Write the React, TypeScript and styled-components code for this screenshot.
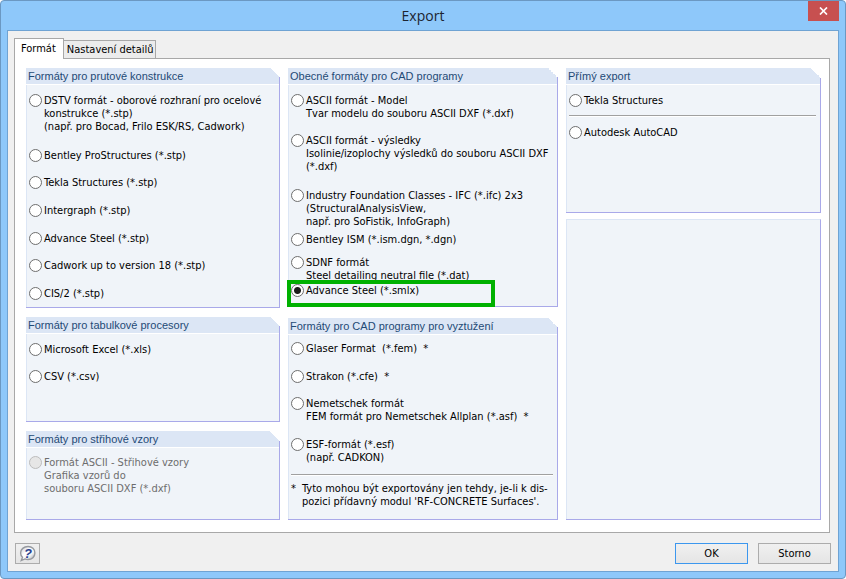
import React, { useId, type ReactNode } from 'react';
import styled, { createGlobalStyle, css } from 'styled-components';

const GlobalStyle = createGlobalStyle`
  * { box-sizing: border-box; }
  body {
    margin: 0;
    background: #fff;
    color: #000;
    font: 11px/13px "DejaVu Sans Condensed", "DejaVu Sans", sans-serif;
  }
  button, input { font: inherit; color: inherit; margin: 0; }
`;

const Window = styled.div`
  display: flex;
  flex-direction: column;
  min-height: 100vh;
  padding: 0 6px 6px;
  background: #8ec8fa;
  border: 1px solid #6b98c2;
  border-radius: 4px;
`;

const TitleBar = styled.header`
  display: grid;
  grid-template-columns: 31px 1fr 31px;
  height: 29px;
`;

const Title = styled.h1`
  grid-column: 2;
  margin: 0;
  font: 14px/30px "Open Sans", "Noto Sans", sans-serif;
  color: #1c2430;
  text-align: center;
`;

const CloseButton = styled.button`
  display: flex;
  align-items: center;
  justify-content: center;
  height: 20px;
  padding: 0;
  border: 0;
  background: #c75050;
`;

const Content = styled.main`
  flex: 1;
  display: flex;
  flex-direction: column;
  padding: 7px 7px 7px 6px;
  background: #f0f0f0;
  border: 1px solid #6fa3d3;
`;

const TabList = styled.div`
  display: flex;
  align-items: flex-end;
`;

const Tab = styled.button<{ $active?: boolean }>`
  position: relative;
  height: 18px;
  padding: 0 1px 0 3px;
  border: 1px solid #a8a8a8;
  border-width: 1px 1px 0 0;
  background: #ececec;
  white-space: nowrap;
  ${(p) =>
    p.$active &&
    css`
      height: 21px;
      margin-bottom: -1px;
      padding: 0 7px 1px 6px;
      border-left-width: 1px;
      background: #fff;
    `}
`;

const TabPanel = styled.section`
  flex: 1;
  display: grid;
  grid-template-columns: minmax(0, 254fr) minmax(0, 270fr) minmax(0, 255fr);
  column-gap: 8px;
  margin-right: 1px;
  padding: 9px 8px 12px 11px;
  background: #fff;
  border: 1px solid #a8a8a8;
`;

const Column = styled.div<{ $gap: number }>`
  display: flex;
  flex-direction: column;
  gap: ${(p) => p.$gap}px;
`;

const GroupBox = styled.section<{ $grow: number }>`
  position: relative;
  flex: ${(p) => p.$grow} 1 0;
  background: #f0f4f9;
  border: solid #a9a9e9;
  border-width: 0 1px 1px 0;
  box-shadow: inset 1px 0 #dce6f5;
`;

const TitledBox = styled(GroupBox)`
  &::after {
    content: '';
    position: absolute;
    top: 0;
    right: -1px;
    width: 10px;
    height: 10px;
    background: linear-gradient(45deg, transparent 50%, #fff 50%);
  }
`;

const EmptyBox = styled(GroupBox)`
  border-top: 1px solid #dce6f5;
`;

const GroupTitle = styled.h2`
  margin: 0;
  height: 17px;
  padding-left: 2px;
  background: #dce6f5;
  border-bottom: 1px solid #fff;
  font: 11px/16px "Liberation Sans", Arial, sans-serif;
  color: #1f4a76;
  white-space: nowrap;
`;

const GroupBody = styled.div<{ $top: number }>`
  padding: ${(p) => p.$top}px 4px 4px 3px;
`;

const Option = styled.div<{ $space: number }>`
  position: relative;
  display: flex;
  align-items: flex-start;
  gap: 2px;
  margin-bottom: ${(p) => p.$space}px;
`;

const Radio = styled.input`
  appearance: none;
  flex: none;
  width: 13px;
  height: 13px;
  border: 1px solid #6e6e6e;
  border-radius: 50%;
  background: #fff;
  &:checked {
    background: radial-gradient(circle, #1c1c1c 3px, #fff 4px);
  }
  &:disabled {
    border-color: #bcbcbc;
    background: #e6e6e6;
  }
`;

const OptionLabel = styled.label<{ $disabled?: boolean }>`
  white-space: pre;
  color: ${(p) => (p.$disabled ? '#6d6d6d' : '#000')};
`;

const Highlight = styled.span`
  position: absolute;
  top: -4px;
  left: -4px;
  width: 208px;
  height: 27px;
  border: 4px solid #00b100;
  pointer-events: none;
`;

const Divider = styled.hr<{ $after: number }>`
  height: 2px;
  margin: 0 0 ${(p) => p.$after}px;
  border: 0;
  border-top: 1px solid #a0a0a0;
  background: #fff;
`;

const Note = styled.p`
  display: flex;
  gap: 6px;
  margin: 0;
  white-space: pre;
`;

const Footer = styled.footer`
  display: flex;
  gap: 10px;
  padding-top: 10px;
`;

const PushButton = styled.button<{ $primary?: boolean }>`
  width: 73px;
  height: 21px;
  padding: 0;
  border: 1px solid ${(p) => (p.$primary ? '#3c97ee' : '#acacac')};
  background: linear-gradient(#f0f0f0, #e5e5e5);
`;

const HelpButton = styled(PushButton)`
  display: flex;
  align-items: center;
  justify-content: center;
  width: 25px;
  margin: 0 auto 0 1px;
`;

function HelpIcon() {
  return (
    <svg width="18" height="18" viewBox="0 0 18 18" aria-hidden="true">
      <defs>
        <linearGradient id="bubble" x1="0" y1="0" x2="1" y2="1">
          <stop offset="0" stopColor="#c4c8cf" />
          <stop offset="0.4" stopColor="#ffffff" />
          <stop offset="0.65" stopColor="#f2f3f5" />
          <stop offset="1" stopColor="#8f9298" />
        </linearGradient>
      </defs>
      <path
        d="M9 1.500c4 0 6.900 2.800 6.900 6.500s-2.900 6.500-6.900 6.500c-1.100 0-2.100-.2-3-.6L2.300 15.500l1.200-3.200C2.300 11.200 1.600 9.700 1.600 8c0-3.700 3.200-6.500 7.400-6.500z"
        fill="url(#bubble)"
        stroke="#96999f"
        strokeWidth="1.400"
      />
      <text x="9" y="12.500" textAnchor="middle" fontFamily="Liberation Sans" fontWeight="bold" fontStyle="italic" fontSize="13" fill="#27408f">
        ?
      </text>
    </svg>
  );
}

interface Format {
  text: string;
  space?: number;
  checked?: boolean;
  disabled?: boolean;
}

function FormatOption({ text, space = 15, checked, disabled }: Format) {
  const id = useId();
  return (
    <Option $space={space}>
      <Radio type="radio" name="format" id={id} defaultChecked={checked} disabled={disabled} />
      <OptionLabel htmlFor={id} $disabled={disabled}>
        {text}
      </OptionLabel>
      {checked && <Highlight />}
    </Option>
  );
}

interface GroupProps {
  title: string;
  grow: number;
  top?: number;
  formats: Format[];
  children?: ReactNode;
}

function Group({ title, grow, top = 9, formats, children }: GroupProps) {
  return (
    <TitledBox $grow={grow} aria-label={title}>
      <GroupTitle>{title}</GroupTitle>
      <GroupBody $top={top}>
        {formats.map((format) => (
          <FormatOption key={format.text} {...format} />
        ))}
        {children}
      </GroupBody>
    </TitledBox>
  );
}

const frameFormats: Format[] = [
  { text: 'DSTV formát - oborové rozhraní pro ocelové\nkonstrukce (*.stp)\n(např. pro Bocad, Frilo ESK/RS, Cadwork)', space: 16 },
  { text: 'Bentley ProStructures (*.stp)', space: 14 },
  { text: 'Tekla Structures (*.stp)' },
  { text: 'Intergraph (*.stp)' },
  { text: 'Advance Steel (*.stp)', space: 14 },
  { text: 'Cadwork up to version 18 (*.stp)' },
  { text: 'CIS/2 (*.stp)', space: 0 },
];

const sheetFormats: Format[] = [
  { text: 'Microsoft Excel (*.xls)', space: 14 },
  { text: 'CSV (*.csv)', space: 0 },
];

const patternFormats: Format[] = [
  { text: 'Formát ASCII - Střihové vzory\nGrafika vzorů do\nsouboru ASCII DXF (*.dxf)', space: 0, disabled: true },
];

const cadFormats: Format[] = [
  { text: 'ASCII formát - Model\nTvar modelu do souboru ASCII DXF (*.dxf)', space: 14 },
  { text: 'ASCII formát - výsledky\nIsolinie/izoplochy výsledků do souboru ASCII DXF\n(*.dxf)', space: 16 },
  { text: 'Industry Foundation Classes - IFC (*.ifc) 2x3\n(StructuralAnalysisView,\nnapř. pro SoFistik, InfoGraph)', space: 5 },
  { text: 'Bentley ISM (*.ism.dgn, *.dgn)', space: 10 },
  { text: 'SDNF formát\nSteel detailing neutral file (*.dat)', space: 2 },
  { text: 'Advance Steel (*.smlx)', space: 0, checked: true },
];

const rebarFormats: Format[] = [
  { text: 'Glaser Format  (*.fem)  *' },
  { text: 'Strakon (*.cfe)  *', space: 14 },
  { text: 'Nemetschek formát\nFEM formát pro Nemetschek Allplan (*.asf)  *' },
  { text: 'ESF-formát (*.esf)\n(např. CADKON)', space: 10 },
];

export default function App() {
  return (
    <>
      <GlobalStyle />
      <Window>
        <TitleBar>
          <Title>Export</Title>
          <CloseButton aria-label="Zavřít">
            <svg width="9" height="8" viewBox="0 0 9 8" aria-hidden="true">
              <path d="M1 0.500L8 7.500M8 0.500L1 7.500" stroke="#fff" strokeWidth="1.700" />
            </svg>
          </CloseButton>
        </TitleBar>
        <Content>
          <TabList role="tablist">
            <Tab role="tab" aria-selected="true" $active>
              Formát
            </Tab>
            <Tab role="tab" aria-selected="false">
              Nastavení detailů
            </Tab>
          </TabList>
          <TabPanel role="tabpanel">
            <Column $gap={9}>
              <Group title="Formáty pro prutové konstrukce" grow={241} formats={frameFormats} />
              <Group title="Formáty pro tabulkové procesory" grow={104} formats={sheetFormats} />
              <Group title="Formáty pro střihové vzory" grow={89} top={8} formats={patternFormats} />
            </Column>
            <Column $gap={11}>
              <Group title="Obecné formáty pro CAD programy" grow={239} formats={cadFormats} />
              <Group title="Formáty pro CAD programy pro vyztužení" grow={202} top={7} formats={rebarFormats}>
                <Divider $after={6} />
                <Note>
                  <span>*</span>
                  <span>{"Tyto mohou být exportovány jen tehdy, je-li k dis-\npozici přídavný modul 'RF-CONCRETE Surfaces'."}</span>
                </Note>
              </Group>
            </Column>
            <Column $gap={6}>
              <TitledBox $grow={145} aria-label="Přímý export">
                <GroupTitle>Přímý export</GroupTitle>
                <GroupBody $top={9}>
                  <FormatOption text="Tekla Structures" space={8} />
                  <Divider $after={9} />
                  <FormatOption text="Autodesk AutoCAD" space={0} />
                </GroupBody>
              </TitledBox>
              <EmptyBox $grow={301} />
            </Column>
          </TabPanel>
          <Footer>
            <HelpButton aria-label="Nápověda">
              <HelpIcon />
            </HelpButton>
            <PushButton $primary>OK</PushButton>
            <PushButton>Storno</PushButton>
          </Footer>
        </Content>
      </Window>
    </>
  );
}
